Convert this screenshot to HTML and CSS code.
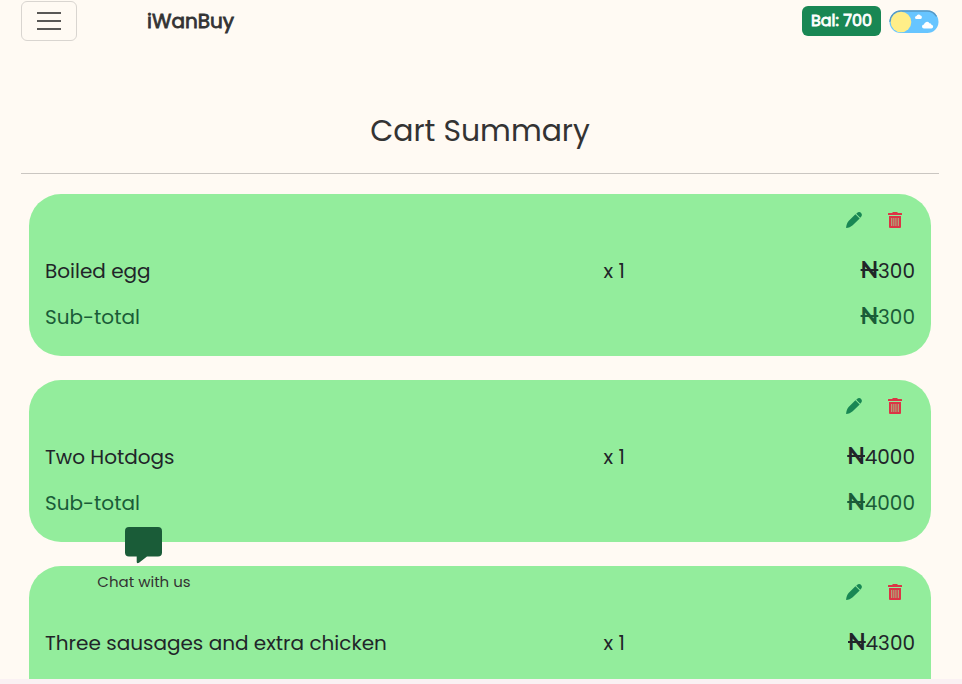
FILE: index.html
```html
<!DOCTYPE html>
<html lang="en">
<head>
<meta charset="utf-8">
<title>iWanBuy</title>
<link rel="stylesheet" href="styles.css">
</head>
<body>
<svg width="0" height="0" class="defs">
  <symbol id="pencil" viewBox="0 0 16 16">
    <path d="M10.800 1.200C12.200-.2 14-.2 15.100.9s1.100 2.900-.2 4.200l-.7.600-4-3.900zM9.400 2.200l4.300 4.200-7 6.900C4.800 14.900 2.600 15.800.1 16 .3 13.400 1 11 2.600 9.100z"/>
  </symbol>
  <symbol id="trash" viewBox="0 0 14 16">
    <path fill-opacity=".4" d="M2.500 5.500h9v9h-9z"/>
    <path d="M4.500 0h5v1H13.500a.5.5 0 0 1 .5.500V3H0V1.500A.5.5 0 0 1 .5 1h4zM1 4h12v11a1 1 0 0 1-1 1H2a1 1 0 0 1-1-1zm2 2v8h1.300V6zm2.200 0v8h1.200V6zm2.100 0v8h1.200V6zm2.400 0v8H11V6z"/>
  </symbol>
</svg>
<div class="page">
  <header class="topbar">
    <button class="menu" aria-label="Menu"><i></i><i></i><i></i></button>
    <span class="brand">iWanBuy</span>
    <span class="balance">Bal: 700</span>
    <svg class="toggle" viewBox="0 0 50 24">
      <rect x=".5" y=".5" width="49" height="22.500" rx="11.250" fill="#67c5ff"/>
      <path d="M1 12A11 11 0 0 1 12 1h26a11 11 0 0 1 9.500 5.500" fill="none" stroke="#5798c4" stroke-width="1.300"/>
      <circle cx="12" cy="12" r="10.300" fill="#ffee88"/>
      <path fill="#fff" d="M27.500 9a1.500 1.500 0 0 1 0-3 2.300 2.300 0 0 1 4-.5 1.800 1.800 0 0 1 0 3.500zM35 18.500a2 2 0 0 1 0-4 2.900 2.900 0 0 1 5.400-1.200 2.200 2.200 0 0 1 2.100 1.400 1.900 1.900 0 0 1-.5 3.800z"/>
    </svg>
  </header>
  <h1><span>Cart Summary</span></h1>
  <main>
    <section class="card">
      <div class="actions"><svg class="edit"><use href="#pencil"/></svg><svg class="delete"><use href="#trash"/></svg></div>
      <div class="row"><span class="name">Boiled egg</span><span class="qty">x 1</span><span class="price"><s>N</s>300</span></div>
      <div class="row subtotal"><span class="name">Sub-total</span><span class="price"><s>N</s>300</span></div>
    </section>
    <section class="card">
      <div class="actions"><svg class="edit"><use href="#pencil"/></svg><svg class="delete"><use href="#trash"/></svg></div>
      <div class="row"><span class="name">Two Hotdogs</span><span class="qty">x 1</span><span class="price"><s>N</s>4000</span></div>
      <div class="row subtotal"><span class="name">Sub-total</span><span class="price"><s>N</s>4000</span></div>
    </section>
    <section class="card">
      <div class="actions"><svg class="edit"><use href="#pencil"/></svg><svg class="delete"><use href="#trash"/></svg></div>
      <div class="row"><span class="name">Three sausages and extra chicken</span><span class="qty">x 1</span><span class="price"><s>N</s>4300</span></div>
    </section>
  </main>
</div>
<a class="chat">
  <svg viewBox="0 0 37 37"><path d="M4 0h29a4 4 0 0 1 4 4v21.500a4 4 0 0 1-4 4H22l-8 6.300c-1.300.900-2.300.300-2.300-1v-5.300H4a4 4 0 0 1-4-4V4a4 4 0 0 1 4-4z"/></svg>
  <span>Chat with us</span>
</a>
</body>
</html>
```

FILE: styles.css
```css
* { box-sizing: border-box; }
body {
  margin: 0;
  height: 684px;
  overflow: hidden;
  background: #faf1f3;
  color: #212529;
  font-family: Poppins, Inter, "Liberation Sans", sans-serif;
  font-size: 20px;
}
.defs { position: absolute; }
.page { height: 679px; overflow: hidden; background: #fffaf3; padding: 0 23px 0 21px; }
.topbar { display: flex; height: 42px; align-items: center; }
.menu {
  display: flex;
  flex-direction: column;
  align-items: center;
  justify-content: center;
  gap: 6px;
  width: 56px;
  height: 40px;
  padding: 0;
  background: none;
  border: 1px solid #d9d5d0;
  border-radius: 6px;
}
.menu i { width: 24px; height: 2px; background: #595856; }
.brand { margin-left: 70px; -webkit-text-stroke: .8px #333; color: #333; line-height: 30px; }
.balance {
  margin-left: auto;
  width: 79px;
  height: 30px;
  border-radius: 6px;
  background: #198754;
  color: #fff;
  -webkit-text-stroke: .8px #fff;
  font-size: 16px;
  line-height: 30px;
  text-align: center;
  white-space: nowrap;
}
.toggle { width: 50px; height: 24px; margin-left: 8px; position: relative; top: 1px; }
h1 {
  margin: 0;
  height: 132px;
  padding-top: 66px;
  border-bottom: 1px solid #cac6c1;
  color: #333;
  font-size: 29.9px;
  font-weight: 400;
  line-height: 46px;
  text-align: center;
}
main { display: flex; flex-direction: column; gap: 24px; padding: 20px 8px 0; }
.card {
  height: 162px;
  flex: none;
  padding: 18px 16px 0;
  border-radius: 32px;
  background: #93ed9c;
}
.actions { display: flex; height: 36px; justify-content: flex-end; gap: 26px; padding-right: 13px; }
.edit { width: 16px; height: 16px; fill: #198754; }
.delete { width: 14px; height: 16px; fill: #dc3545; }
.row { display: flex; height: 46px; line-height: 46px; white-space: nowrap; }
.name { width: 558.6px; }
.price { margin-left: auto; }
.price s {
  display: inline-block;
  width: 17.5px;
  text-align: center;
  font-family: Lato, sans-serif;
  font-weight: 700;
  font-size: 23px;
  line-height: 30px;
  text-decoration-thickness: 2px;
}
.subtotal { color: #1a5c38; }
.chat {
  position: absolute;
  left: 97px;
  top: 527px;
  width: 94px;
  display: flex;
  flex-direction: column;
  align-items: center;
  color: #333;
  font-size: 15px;
  line-height: 20px;
  white-space: nowrap;
}
.chat svg { width: 37px; height: 37px; margin: 0 1px 8px 0; fill: #1a5c38; }
```
